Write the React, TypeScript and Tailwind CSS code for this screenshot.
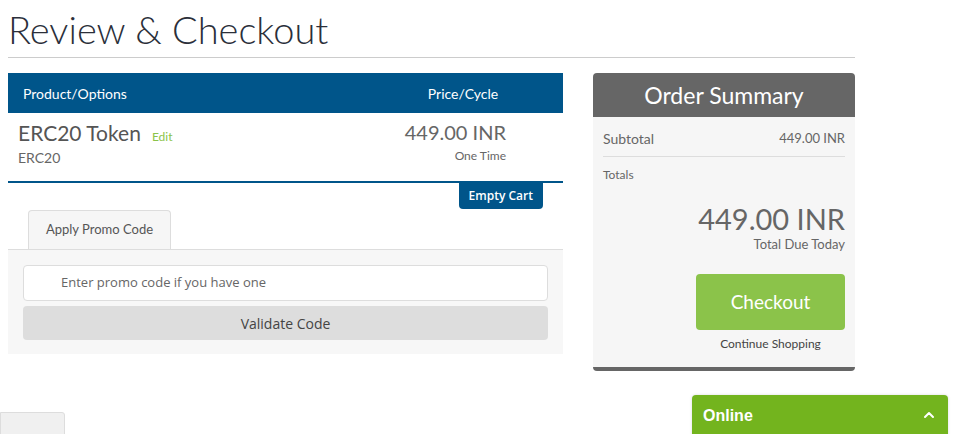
import { ChevronUp } from "lucide-react";

const raleway = "font-['Lato','Open_Sans',sans-serif]";
const opensans = "font-['Open_Sans',sans-serif]";

const CartTable = () => (
  <div className="w-[555px]">
    <div className="flex h-[40px] items-center bg-[#00558a] text-[14px] text-white">
      <div className={`${raleway} flex-1 pl-[15px]`}>Product/Options</div>
      <div className={`${raleway} w-[200px] text-center`}>Price/Cycle</div>
    </div>
    <div className="flex h-[70px] border-b-2 border-[#00558a] pt-[4px]">
      <div className="flex-1 pl-[10px]">
        <div className="flex items-baseline gap-[11px]">
          <span className={`${raleway} text-[21px] text-[#555]`}>ERC20 Token</span>
          <span className={`${raleway} text-[12px] text-[#8bc34a]`}>Edit</span>
        </div>
        <div className={`${raleway} -mt-[2px] text-[14px] text-[#666]`}>ERC20</div>
      </div>
      <div className="w-[200px] pr-[57px] text-right">
        <div className={`${raleway} text-[20px] text-[#666]`}>449.00 INR</div>
        <div className={`${raleway} text-[12px] text-[#666]`}>One Time</div>
      </div>
    </div>
    <div className="flex justify-end pr-[20px]">
      <button className={`${opensans} h-[26px] rounded-b-[4px] bg-[#00558a] px-[10px] text-[12px] font-semibold text-white`}>
        Empty Cart
      </button>
    </div>
    <div className="mt-[1px] flex pl-[20px]">
      <div className="flex h-[39px] w-[143px] items-center justify-center rounded-t-[4px] border border-b-0 border-[#ddd] bg-[#f6f6f6]">
        <span className={`${raleway} text-[13px] text-[#555]`}>Apply Promo Code</span>
      </div>
    </div>
    <div className="border-t border-[#ddd] bg-[#f7f7f7] px-[15px] pb-[14px] pt-[15px]">
      <div className={`${opensans} flex h-[36px] items-center rounded-[4px] border border-[#ddd] bg-white pl-[37px] text-[13px] text-[#666]`}>
        Enter promo code if you have one
      </div>
      <button className={`${opensans} mt-[5px] h-[34px] w-full rounded-[4px] bg-[#ddd] text-[14px] text-[#444]`}>
        Validate Code
      </button>
    </div>
  </div>
);

const OrderSummary = () => (
  <div className="w-[262px]">
    <div className="flex h-[44px] items-center justify-center rounded-t-[4px] bg-[#666]">
      <span className={`${raleway} text-[23px] text-white`}>Order Summary</span>
    </div>
    <div className="rounded-b-[4px] border-b-[4px] border-[#666] bg-[#f6f6f6] px-[10px] pb-[14px]">
      <div className="flex h-[40px] items-center justify-between border-b border-[#ddd] pt-[4px]">
        <span className={`${raleway} text-[14px] text-[#666]`}>Subtotal</span>
        <span className={`${raleway} text-[13px] text-[#666]`}>449.00 INR</span>
      </div>
      <div className={`${raleway} pt-[9px] text-[12px] text-[#666]`}>Totals</div>
      <div className="mt-[18px] text-right">
        <div className={`${raleway} text-[29px] leading-[34px] text-[#666]`}>449.00 INR</div>
        <div className={`${raleway} text-[13px] leading-[16px] text-[#666]`}>Total Due Today</div>
      </div>
      <div className="mt-[22px] flex flex-col items-end">
        <button className={`${raleway} h-[56px] w-[149px] rounded-[4px] bg-[#8bc34a] text-[19px] text-white`}>
          Checkout
        </button>
        <div className={`${raleway} mt-[5px] w-[149px] text-center text-[12px] text-[#444]`}>Continue Shopping</div>
      </div>
    </div>
  </div>
);

export default function App() {
  return (
    <div className="relative h-[434px] w-[959px] overflow-hidden bg-white">
      <div className="w-[855px] pl-[8px]">
        <h1 className={`${raleway} pt-[5px] text-[38px] leading-[48px] font-light text-[#2b2f3a]`}>Review &amp; Checkout</h1>
        <div className="mt-[4px] border-t border-[#ccc]" />
        <div className="mt-[15px] flex gap-[30px]">
          <CartTable />
          <OrderSummary />
        </div>
      </div>
      <div className="absolute left-0 top-[412px] h-[30px] w-[65px] rounded-tr-[3px] border border-[#ddd] bg-[#f0f0f0]" />
      <div className="absolute left-[692px] top-[395px] flex h-[45px] w-[256px] items-start justify-between rounded-t-[4px] bg-[#73b41e] px-[11px] pt-[9px] shadow-[0_0_3px_rgba(0,0,0,0.15)]">
        <span className="font-['Liberation_Sans',Arial,sans-serif] text-[16px] font-bold text-white">Online</span>
        <ChevronUp className="mt-[3px] h-[16px] w-[16px] text-white" strokeWidth={3} />
      </div>
    </div>
  );
}
